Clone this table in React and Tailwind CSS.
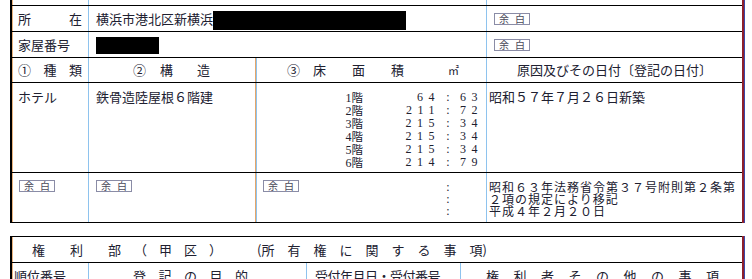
const jp = "font-['Noto_Sans_CJK_JP',sans-serif]";
const serif = "font-['Liberation_Serif','Noto_Sans_CJK_JP',serif]";
const frame =
  "ml-[10px] w-[734px] border-l-2 border-r-2 border-l-black border-r-[#8e1f2c] shadow-[inset_1px_0_0_#eab47e,1px_0_0_#3a48a8]";
const vBlue = "border-l border-[#8ec3ee]";
const vOrange = "border-l border-[#e5a66a] shadow-[inset_1px_0_0_#8ec3ee]";

const floors = [
  ["1", "64", "63"],
  ["2", "211", "72"],
  ["3", "215", "34"],
  ["4", "215", "34"],
  ["5", "215", "34"],
  ["6", "214", "79"],
];

function Yohaku() {
  return (
    <span className="flex h-[12px] w-[36px] items-center justify-between border border-[#8a8ca6] px-[4px] text-[10px] leading-none text-[#4a4a5a]">
      <span>余</span>
      <span>白</span>
    </span>
  );
}

export default function App() {
  return (
    <div className={`min-h-screen bg-white pb-4 text-[13px] text-[#202030] ${jp}`}>
      {/* 表題部 */}
      <div className={frame}>
        <div className="flex h-[5px]">
          <div className="w-[76px]" />
          <div className={`w-[398px] ${vBlue}`} />
          <div className={`flex-1 ${vBlue}`} />
        </div>

        <div className="flex h-[26px] border-t border-black">
          <div className="flex w-[76px] items-center justify-between px-[6px]">
            <span>所</span>
            <span>在</span>
          </div>
          <div className={`flex w-[398px] items-center pl-[7px] ${vBlue}`}>
            <span>横浜市港北区新横浜</span>
            <span className="mt-[3px] h-[19px] w-[193px] bg-black" />
          </div>
          <div className={`flex flex-1 items-center pl-[7px] ${vBlue}`}>
            <Yohaku />
          </div>
        </div>

        <div className="flex h-[26px] border-t border-black">
          <div className="flex w-[76px] items-center px-[6px]">家屋番号</div>
          <div className={`flex w-[398px] items-center pl-[7px] ${vBlue}`}>
            <span className="mt-[2px] h-[17px] w-[63px] bg-black" />
          </div>
          <div className={`flex flex-1 items-center pl-[7px] ${vBlue}`}>
            <Yohaku />
          </div>
        </div>

        <div className="flex h-[25px] border-t border-black">
          <div className="flex w-[76px] items-center justify-between px-[6px]">
            <span>①</span>
            <span>種</span>
            <span>類</span>
          </div>
          <div className={`flex w-[167px] items-center pl-[44px] ${vBlue}`}>
            <span>②</span>
            <span className="ml-[14px]">構</span>
            <span className="ml-[24px]">造</span>
          </div>
          <div className={`flex w-[231px] items-center pl-[31px] ${vOrange}`}>
            <span>③</span>
            <span className="ml-[13px]">床</span>
            <span className="ml-[26px]">面</span>
            <span className="ml-[26px]">積</span>
            <span className="ml-[44px] text-[11px]">㎡</span>
          </div>
          <div className={`flex flex-1 items-center justify-center ${vBlue}`}>
            原因及びその日付〔登記の日付〕
          </div>
        </div>

        <div className="flex h-[90px] border-t border-black leading-[15px]">
          <div className="w-[76px] px-[6px] pt-[6px]">ホテル</div>
          <div className={`w-[167px] pl-[7px] pt-[6px] ${vBlue}`}>鉄骨造陸屋根６階建</div>
          <div className={`w-[231px] pt-[8px] text-[12px] leading-[12px] ${serif} ${vOrange}`}>
            {floors.map(([f, a, b]) => (
              <div key={f} className="flex">
                <span className="w-[107px] text-right">
                  {f}
                  <span className={`text-[11.5px] ${jp}`}>階</span>
                </span>
                <span className="w-[77px] text-right tracking-[5.5px]">{a}</span>
                <span className="w-[16px] text-center">:</span>
                <span className="pl-[4px] tracking-[5.5px]">{b}</span>
              </div>
            ))}
          </div>
          <div className={`flex-1 pl-[2px] pt-[6px] ${vBlue}`}>昭和５７年７月２６日新築</div>
        </div>

        <div className="flex h-[51px] border-y border-black">
          <div className="w-[76px] pl-[7px] pt-[7px]">
            <Yohaku />
          </div>
          <div className={`w-[167px] pl-[7px] pt-[7px] ${vBlue}`}>
            <Yohaku />
          </div>
          <div className={`flex w-[231px] ${vOrange}`}>
            <div className="pl-[7px] pt-[7px]">
              <Yohaku />
            </div>
            <div className={`ml-[141px] w-[16px] pt-[8px] text-center text-[12px] leading-[12px] ${serif}`}>
              <div>:</div>
              <div>:</div>
              <div>:</div>
            </div>
          </div>
          <div className={`flex-1 whitespace-nowrap pl-[2px] pt-[8px] text-[12px] leading-[12px] tracking-[1px] ${vBlue}`}>
            <div>昭和６３年法務省令第３７号附則第２条第</div>
            <div>２項の規定により移記</div>
            <div>平成４年２月２０日</div>
          </div>
        </div>
      </div>

      {/* 権利部（甲区） */}
      <div className={`mt-[13px] ${frame}`}>
        <div className="flex h-[26px] items-center whitespace-nowrap border-t border-black">
          <span className="ml-[20px] tracking-[25px]">権利</span>
          <span>部</span>
          <span className="ml-[13px] tracking-[12px]">（甲区）</span>
          <span className="ml-[23px]">(</span>
          <span className="tracking-[13px]">所有権に関する事</span>
          <span>項)</span>
        </div>
        <div className="flex h-[40px] whitespace-nowrap border-t border-black leading-[15px]">
          <div className="w-[76px] pl-[2px] pt-[5px]">順位番号</div>
          <div className={`w-[218px] pl-[44px] pt-[5px] tracking-[12.5px] ${vBlue}`}>登記の目的</div>
          <div className={`w-[154px] pl-[8px] pt-[5px] tracking-[-0.5px] ${vBlue}`}>受付年月日・受付番号</div>
          <div className={`flex-1 pl-[25px] pt-[5px] tracking-[14.5px] ${vBlue}`}>権利者その他の事項</div>
        </div>
      </div>
    </div>
  );
}
